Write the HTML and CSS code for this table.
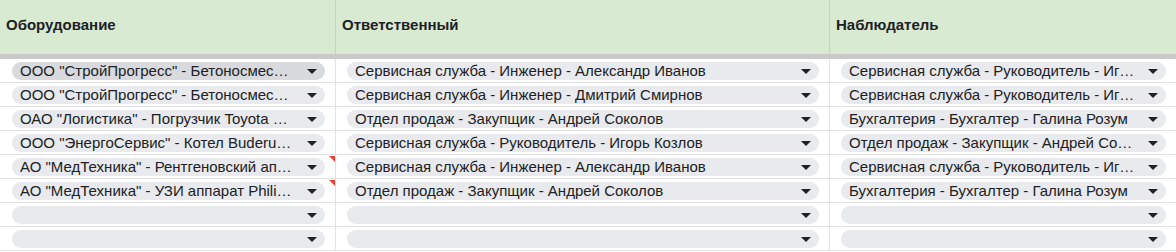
FILE: index.html
```html
<!DOCTYPE html>
<html lang="ru">
<head>
<meta charset="utf-8">
<title>Таблица</title>
<link rel="stylesheet" href="styles.css">
</head>
<body>
<div class="sheet">
  <div class="head">
    <div class="hcell c1">Оборудование</div>
    <div class="hcell c2">Ответственный</div>
    <div class="hcell c3">Наблюдатель</div>
  </div>
  <div class="divider"></div>

  <div class="row">
    <div class="cell c1"><div class="chip active"><span class="txt">ООО "СтройПрогресс" - Бетоносмеситель Liebherr</span><span class="arrow"></span></div></div>
    <div class="cell c2"><div class="chip"><span class="txt">Сервисная служба - Инженер - Александр Иванов</span><span class="arrow"></span></div></div>
    <div class="cell c3"><div class="chip"><span class="txt">Сервисная служба - Руководитель - Игорь Козлов</span><span class="arrow"></span></div></div>
  </div>
  <div class="row">
    <div class="cell c1"><div class="chip"><span class="txt">ООО "СтройПрогресс" - Бетоносмеситель Liebherr</span><span class="arrow"></span></div></div>
    <div class="cell c2"><div class="chip"><span class="txt">Сервисная служба - Инженер - Дмитрий Смирнов</span><span class="arrow"></span></div></div>
    <div class="cell c3"><div class="chip"><span class="txt">Сервисная служба - Руководитель - Игорь Козлов</span><span class="arrow"></span></div></div>
  </div>
  <div class="row">
    <div class="cell c1"><div class="chip"><span class="txt">ОАО "Логистика" - Погрузчик Toyota 8FBE</span><span class="arrow"></span></div></div>
    <div class="cell c2"><div class="chip"><span class="txt">Отдел продаж - Закупщик - Андрей Соколов</span><span class="arrow"></span></div></div>
    <div class="cell c3"><div class="chip"><span class="txt">Бухгалтерия - Бухгалтер - Галина Розум</span><span class="arrow"></span></div></div>
  </div>
  <div class="row">
    <div class="cell c1"><div class="chip"><span class="txt">ООО "ЭнергоСервис" - Котел Buderus Logano</span><span class="arrow"></span></div></div>
    <div class="cell c2"><div class="chip"><span class="txt">Сервисная служба - Руководитель - Игорь Козлов</span><span class="arrow"></span></div></div>
    <div class="cell c3"><div class="chip"><span class="txt">Отдел продаж - Закупщик - Андрей Соколов</span><span class="arrow"></span></div></div>
  </div>
  <div class="row">
    <div class="cell c1 note"><div class="chip"><span class="txt">АО "МедТехника" - Рентгеновский аппарат Siemens</span><span class="arrow"></span></div></div>
    <div class="cell c2"><div class="chip"><span class="txt">Сервисная служба - Инженер - Александр Иванов</span><span class="arrow"></span></div></div>
    <div class="cell c3"><div class="chip"><span class="txt">Сервисная служба - Руководитель - Игорь Козлов</span><span class="arrow"></span></div></div>
  </div>
  <div class="row">
    <div class="cell c1 note"><div class="chip"><span class="txt">АО "МедТехника" - УЗИ аппарат Philips EPIQ</span><span class="arrow"></span></div></div>
    <div class="cell c2"><div class="chip"><span class="txt">Отдел продаж - Закупщик - Андрей Соколов</span><span class="arrow"></span></div></div>
    <div class="cell c3"><div class="chip"><span class="txt">Бухгалтерия - Бухгалтер - Галина Розум</span><span class="arrow"></span></div></div>
  </div>
  <div class="row">
    <div class="cell c1"><div class="chip"><span class="txt"></span><span class="arrow"></span></div></div>
    <div class="cell c2"><div class="chip"><span class="txt"></span><span class="arrow"></span></div></div>
    <div class="cell c3"><div class="chip"><span class="txt"></span><span class="arrow"></span></div></div>
  </div>
  <div class="row">
    <div class="cell c1"><div class="chip"><span class="txt"></span><span class="arrow"></span></div></div>
    <div class="cell c2"><div class="chip"><span class="txt"></span><span class="arrow"></span></div></div>
    <div class="cell c3"><div class="chip"><span class="txt"></span><span class="arrow"></span></div></div>
  </div>
</div>
</body>
</html>
```

FILE: styles.css
```css
* { box-sizing: border-box; }
html, body { margin: 0; padding: 0; background: #ffffff; }
body {
  font-family: "Liberation Sans", Arial, sans-serif;
  font-size: 15px;
  color: #202124;
  width: 1176px;
  height: 252px;
  overflow: hidden;
}
.sheet { display: flex; flex-direction: column; }
.head {
  display: grid;
  grid-template-columns: 336px 494px 346px;
  height: 54px;
  background: #d9ead3;
}
.hcell {
  font-weight: bold;
  padding: 16px 0 0 6px;
  border-right: 1px solid #c3d8bd;
  line-height: 17px;
}
.hcell.c3 { border-right: none; }
.divider { height: 5px; background: #c9c9c9; }
.row {
  display: grid;
  grid-template-columns: 336px 494px 346px;
  height: 24px;
  border-bottom: 1px solid #e2e2e2;
}
.row:first-of-type { }
.cell {
  position: relative;
  border-right: 1px solid #e2e2e2;
  display: flex;
  align-items: center;
  padding: 1px 10px 0 12px;
}
.cell.c2, .cell.c3 { padding-left: 11px; }
.cell.c3 { border-right: none; }
.cell.note::after {
  content: "";
  position: absolute;
  top: 1px;
  right: 0;
  width: 0;
  height: 0;
  border-top: 6px solid #ea4335;
  border-left: 6px solid transparent;
}
.chip {
  flex: 1;
  height: 18px;
  border-radius: 9px;
  background: #e8eaed;
  display: flex;
  align-items: center;
  padding: 0 8px 0 8px;
  min-width: 0;
}
.chip.active { background: #d8dadd; }
.txt {
  flex: 1;
  min-width: 0;
  white-space: nowrap;
  overflow: hidden;
  text-overflow: ellipsis;
  line-height: 18px;
}
.arrow {
  flex: none;
  width: 0;
  height: 0;
  margin-left: 12px;
  border-left: 5px solid transparent;
  border-right: 5px solid transparent;
  border-top: 5px solid #202124;
}
```
